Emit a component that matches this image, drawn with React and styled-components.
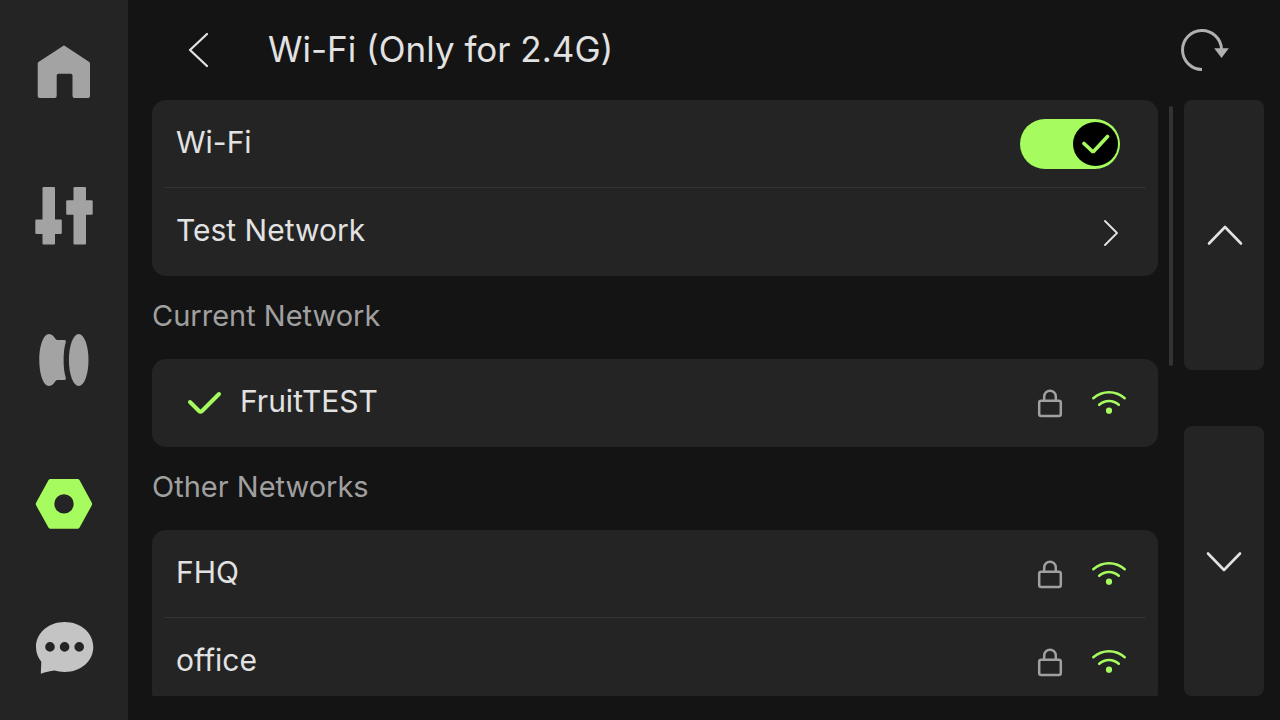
import React, { useState } from "react";
import styled, { createGlobalStyle } from "styled-components";

const GlobalStyle = createGlobalStyle`
  * { box-sizing: border-box; }
  body {
    margin: 0;
    background: #141414;
    color: #e2e2e2;
    font-family: Inter, "Liberation Sans", sans-serif;
  }
  button { font: inherit; color: inherit; border: 0; padding: 0; cursor: pointer; }
  svg { display: block; flex: none; }
`;

const Screen = styled.div`
  display: flex;
  height: 100vh;
`;

const Sidebar = styled.nav`
  flex: none;
  display: flex;
  flex-direction: column;
  width: 128px;
  background: #242424;
`;

const NavButton = styled.button`
  flex: 1;
  display: grid;
  place-items: center;
  background: transparent;
  color: ${(p) => p.$tone || "#a3a3a3"};
`;

const Main = styled.main`
  flex: 1;
  min-width: 0;
  display: flex;
  flex-direction: column;
  padding: 0 16px 24px 24px;
`;

const Header = styled.header`
  flex: none;
  display: flex;
  align-items: center;
  height: 100px;
  padding: 0 34px 0 18px;
`;

const IconButton = styled.button`
  display: grid;
  place-items: center;
  width: 56px;
  height: 56px;
  background: transparent;
  color: ${(p) => p.$tone};
`;

const Title = styled.h1`
  flex: 1;
  margin: 0;
  padding: 0 0 2px 42px;
  font-size: 35px;
  font-weight: 400;
  line-height: 48px;
`;

const Body = styled.div`
  flex: 1;
  min-height: 0;
  display: flex;
`;

const List = styled.div`
  flex: 1;
  overflow-y: auto;
  scrollbar-width: none;
`;

const ScrollTrack = styled.div`
  flex: none;
  width: 26px;
  padding: 6px 11px 0;
`;

const ScrollThumb = styled.div`
  width: 4px;
  height: 44%;
  border-radius: 2px;
  background: #333;
`;

const Pager = styled.div`
  flex: none;
  display: flex;
  flex-direction: column;
  gap: 56px;
  width: 80px;
`;

const PageButton = styled.button`
  flex: 1;
  display: grid;
  place-items: center;
  border-radius: 8px;
  background: #242424;
`;

const Card = styled.ul`
  margin: 0;
  padding: 0 12px;
  list-style: none;
  border-radius: 14px;
  background: #242424;
`;

const Item = styled.li`
  height: 88px;
  border-bottom: 1px solid transparent;
  &:not(:last-child) { border-color: #333; }
`;

const Row = styled.div`
  display: flex;
  align-items: center;
  width: 100%;
  height: 100%;
  padding: 0 ${(p) => p.$end || "26px"} 0 12px;
  background: transparent;
  text-align: left;
`;

const Label = styled.span`
  flex: 1;
  padding-bottom: 4px;
  font-size: 30px;
  line-height: 36px;
`;

const SectionTitle = styled.h2`
  margin: 0;
  padding: 22px 0 25px;
  font-size: 29px;
  font-weight: 400;
  line-height: 36px;
  color: #a0a0a0;
`;

const Signals = styled.span`
  display: flex;
  align-items: center;
  gap: 28px;
`;

const Tick = styled.span`
  padding: 0 18px 0 10px;
`;

const Switch = styled.span`
  position: relative;
  width: 100px;
  height: 50px;
`;

const SwitchInput = styled.input`
  appearance: none;
  display: block;
  width: 100%;
  height: 100%;
  margin: 0;
  border-radius: 25px;
  background: #a6fc5e;
  cursor: pointer;
  &:not(:checked) { background: #555; }
`;

const Knob = styled.span`
  position: absolute;
  top: 3px;
  left: ${(p) => (p.$on ? "53px" : "3px")};
  display: grid;
  place-items: center;
  width: 45px;
  height: 44px;
  border-radius: 50%;
  background: #000;
  pointer-events: none;
`;

const NavIcon = ({ children }) => (
  <svg width="64" height="64" viewBox="0 0 64 64" fill="currentColor" aria-hidden="true">
    {children}
  </svg>
);

const HomeIcon = () => (
  <NavIcon>
    <path d="M31 5.9Q32 5.2 33 5.9L57.3 22Q58 22.5 58 23.5V56Q58 58 56 58H42.5Q40.5 58 40.5 56V35.5Q40.5 33.7 38.7 33.7H26.5Q24.7 33.7 24.7 35.5V56Q24.7 58 22.7 58H7.7Q5.7 58 5.7 56V23.5Q5.7 22.5 6.5 22Z" />
  </NavIcon>
);

const SlidersIcon = () => (
  <NavIcon>
    <rect x="10.5" y="3" width="12.5" height="57.5" rx="1.2" />
    <rect x="3.3" y="35.5" width="26.5" height="14.5" rx="1.2" />
    <rect x="41.5" y="3" width="12.5" height="57.5" rx="1.2" />
    <rect x="34.2" y="16.3" width="26.5" height="14.5" rx="1.2" />
  </NavIcon>
);

const SpoolIcon = () => (
  <NavIcon>
    <path d="M17 6C20 6 22 8.5 23.5 11Q24.3 12 25.5 12H32.5Q34.3 12 33.8 14.2Q31.6 21 31.6 32T33.8 49.8Q34.3 52 32.5 52H25.5Q24.3 52 23.5 53C22 55.5 20 58 17 58C11.5 58 7.3 46.5 7.3 32S11.5 6 17 6Z" />
    <ellipse cx="46.7" cy="32" rx="9.8" ry="26" />
  </NavIcon>
);

const NutIcon = () => (
  <NavIcon>
    <path
      fillRule="evenodd"
      d="M18.5 7H45.5Q46.9 7 47.6 8.2L59.7 30.5Q60.5 32 59.7 33.5L47.6 55.5Q46.9 56.7 45.5 56.7H18.5Q17.1 56.7 16.4 55.5L4.2 33.5Q3.4 32 4.2 30.5L16.4 8.2Q17.1 7 18.5 7ZM32 22.2A9.7 9.7 0 1 0 32 41.6A9.7 9.7 0 1 0 32 22.2Z"
    />
  </NavIcon>
);

const ChatIcon = () => (
  <NavIcon>
    <path
      fillRule="evenodd"
      d="M32.6 6C49 6 61.3 17 61.3 31S49 56 32.6 56C28.5 56 25.5 55.3 22.5 54.6C18 55 13 56.5 9.6 57.6Q8.8 57.8 8.8 57L9.3 45.8C6 41.5 4 37 4 31C4 17 16.5 6 32.6 6ZM18 26.1A4.8 4.8 0 1 0 18 35.7A4.8 4.8 0 1 0 18 26.1ZM32.6 26.1A4.8 4.8 0 1 0 32.6 35.7A4.8 4.8 0 1 0 32.6 26.1ZM47.2 26.1A4.8 4.8 0 1 0 47.2 35.7A4.8 4.8 0 1 0 47.2 26.1Z"
    />
  </NavIcon>
);

const Stroke = ({ w, h, d, weight, tone = "currentColor" }) => (
  <svg
    width={w}
    height={h}
    viewBox={`0 0 ${w} ${h}`}
    fill="none"
    stroke={tone}
    strokeWidth={weight}
    strokeLinecap="round"
    strokeLinejoin="round"
    aria-hidden="true"
  >
    <path d={d} />
  </svg>
);

const RefreshIcon = () => (
  <svg width="56" height="56" viewBox="0 0 56 56" aria-hidden="true">
    <path d="M47.5 27A19.5 19.5 0 1 0 28 47.5" fill="none" stroke="currentColor" strokeWidth="3" />
    <path d="M40.2 26.2H54.8L47.5 36Z" fill="currentColor" />
  </svg>
);

const LockIcon = () => (
  <svg width="26" height="30" viewBox="0 0 26 30" fill="none" stroke="#a0a0a0" strokeWidth="2.5" aria-hidden="true">
    <rect x="2.2" y="12.7" width="21.6" height="15.3" rx="2" />
    <path d="M7.2 12.5V8.5A5.8 5.8 0 0 1 18.8 8.5V12.5" />
  </svg>
);

const WifiIcon = () => (
  <svg width="36" height="30" viewBox="0 0 36 30" fill="none" stroke="#a6fc5e" strokeWidth="2.5" strokeLinecap="round" aria-hidden="true">
    <path d="M2.3 10.2C11.5 2.2 24.5 2.2 33.7 10.2" />
    <path d="M8.2 16.8C14 11.6 22 11.6 27.8 16.8" />
    <circle cx="18" cy="22.7" r="3.1" fill="#a6fc5e" stroke="none" />
  </svg>
);

const Network = ({ name, current }) => (
  <Item>
    <Row as="button" type="button" $end="19px">
      {current && (
        <Tick>
          <Stroke w={36} h={30} weight={4} tone="#a6fc5e" d="M4 14L13 23Q14.5 24.3 16 23L33 6" />
        </Tick>
      )}
      <Label>{name}</Label>
      <Signals>
        <LockIcon />
        <WifiIcon />
      </Signals>
    </Row>
  </Item>
);

export default function App() {
  const [on, setOn] = useState(true);
  return (
    <>
      <GlobalStyle />
      <Screen>
        <Sidebar aria-label="Main">
          <NavButton type="button" aria-label="Home"><HomeIcon /></NavButton>
          <NavButton type="button" aria-label="Controls"><SlidersIcon /></NavButton>
          <NavButton type="button" aria-label="Filament"><SpoolIcon /></NavButton>
          <NavButton type="button" aria-label="Settings" aria-current="page" $tone="#a6fc5e"><NutIcon /></NavButton>
          <NavButton type="button" aria-label="Messages" $tone="#c4c4c4"><ChatIcon /></NavButton>
        </Sidebar>
        <Main>
          <Header>
            <IconButton type="button" aria-label="Back" $tone="#e2e2e2">
              <Stroke w={24} h={40} weight={2.3} d="M21 4L4 20L21 36" />
            </IconButton>
            <Title>Wi-Fi (Only for 2.4G)</Title>
            <IconButton type="button" aria-label="Refresh" $tone="#b0b0b0">
              <RefreshIcon />
            </IconButton>
          </Header>
          <Body>
            <List>
              <Card>
                <Item>
                  <Row as="label">
                    <Label>Wi-Fi</Label>
                    <Switch>
                      <SwitchInput type="checkbox" role="switch" checked={on} onChange={(e) => setOn(e.target.checked)} />
                      <Knob $on={on}>
                        {on && <Stroke w={28} h={22} weight={3.6} tone="#a6fc5e" d="M2 10.5L10 18Q11 18.8 12 18L25.500 3.5" />}
                      </Knob>
                    </Switch>
                  </Row>
                </Item>
                <Item>
                  <Row as="button" type="button">
                    <Label>Test Network</Label>
                    <Stroke w={18} h={28} weight={1.8} d="M3 3L15 15L3 27" />
                  </Row>
                </Item>
              </Card>
              <SectionTitle>Current Network</SectionTitle>
              <Card>
                <Network name="FruitTEST" current />
              </Card>
              <SectionTitle>Other Networks</SectionTitle>
              <Card>
                <Network name="FHQ" />
                <Network name="office" />
              </Card>
            </List>
            <ScrollTrack>
              <ScrollThumb />
            </ScrollTrack>
            <Pager>
              <PageButton type="button" aria-label="Scroll up">
                <Stroke w={38} h={22} weight={2.6} d="M4 19.5L20 3L36 19.5" />
              </PageButton>
              <PageButton type="button" aria-label="Scroll down">
                <Stroke w={38} h={22} weight={2.6} d="M3 3.5L19 20L35 3.5" />
              </PageButton>
            </Pager>
          </Body>
        </Main>
      </Screen>
    </>
  );
}
